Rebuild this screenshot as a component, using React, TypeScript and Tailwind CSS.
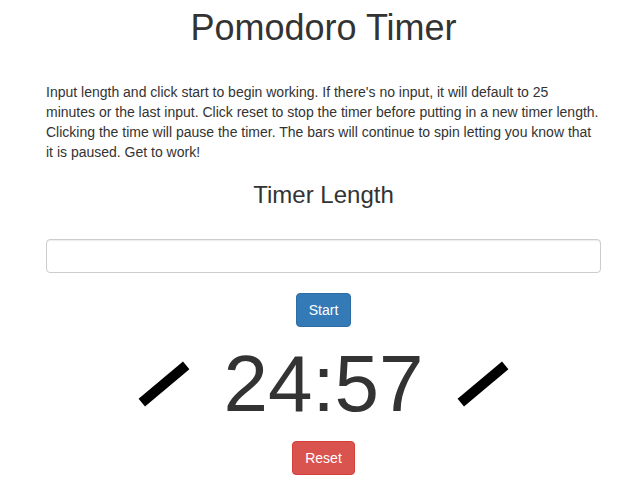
import React from "react";

function SpinBar() {
  return <div className="w-[58px] h-[10px] bg-black -rotate-[40deg] shrink-0" />;
}

export default function App() {
  return (
    <div className="min-h-[490px] bg-white pl-[46px] pr-[43px] text-[#333] font-['Liberation_Sans',Arial,sans-serif]">
      <h1 className="pt-[8px] text-center text-[36px] leading-[39.6px] font-normal">
        Pomodoro Timer
      </h1>
      <p className="mt-[34px] text-[14px] leading-[20px]">
        Input length and click start to begin working. If there's no input, it
        will default to 25 minutes or the last input. Click reset to stop the
        timer before putting in a new timer length. Clicking the time will pause
        the timer. The bars will continue to spin letting you know that it is
        paused. Get to work!
      </p>
      <h3 className="mt-[20px] text-center text-[24px] leading-[26.4px] font-normal">
        Timer Length
      </h3>
      <input
        type="text"
        className="mt-[31px] block w-full h-[34px] px-3 text-[14px] border border-[#ccc] rounded-[4px] shadow-[inset_0_1px_1px_rgba(0,0,0,0.075)] outline-none"
      />
      <div className="mt-[20px] flex justify-center">
        <button className="h-[34px] px-[12px] text-[14px] leading-[20px] text-white bg-[#337ab7] border border-[#2e6da4] rounded-[4px]">
          Start
        </button>
      </div>
      <div className="mt-[17px] flex items-center justify-center gap-[30px]">
        <SpinBar />
        <span className="text-[80px] leading-[80px]">24:57</span>
        <SpinBar />
      </div>
      <div className="mt-[17px] flex justify-center">
        <button className="h-[34px] px-[12px] text-[14px] leading-[20px] text-white bg-[#d9534f] border border-[#d43f3a] rounded-[4px]">
          Reset
        </button>
      </div>
    </div>
  );
}
